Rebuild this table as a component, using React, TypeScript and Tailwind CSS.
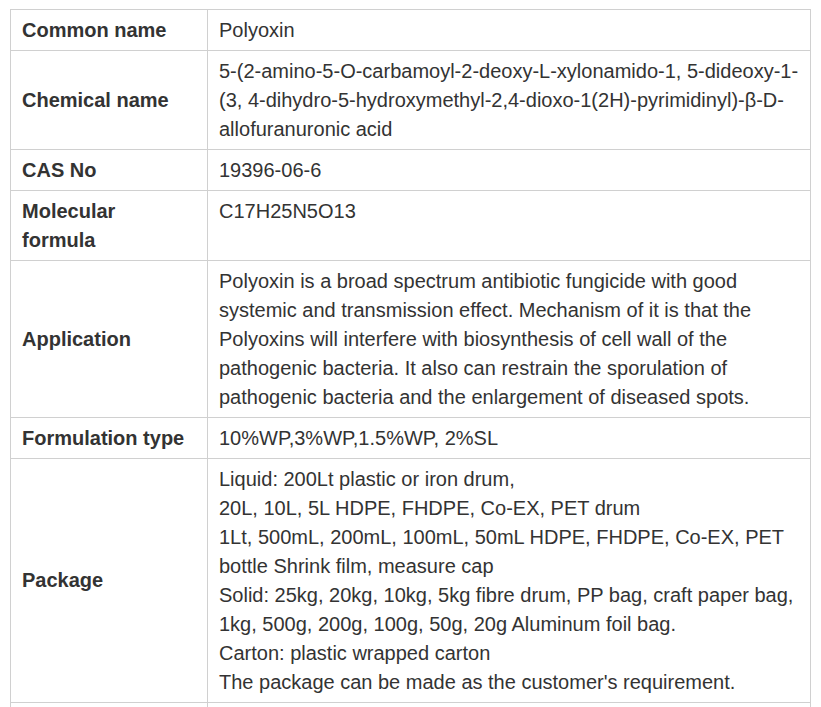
import React from "react";

const rows: { label: React.ReactNode; value: React.ReactNode; top?: boolean }[] = [
  { label: "Common name", value: "Polyoxin" },
  {
    label: "Chemical name",
    value: (
      <>
        5-(2-amino-5-O-carbamoyl-2-deoxy-L-xylonamido-1, 5-dideoxy-1-
        <br />
        (3, 4-dihydro-5-hydroxymethyl-2,4-dioxo-1(2H)-pyrimidinyl)-β-D-
        <br />
        allofuranuronic acid
      </>
    ),
  },
  { label: "CAS No", value: "19396-06-6" },
  {
    label: (
      <>
        Molecular
        <br />
        formula
      </>
    ),
    value: "C17H25N5O13",
    top: true,
  },
  {
    label: "Application",
    value: (
      <>
        Polyoxin is a broad spectrum antibiotic fungicide with good
        <br />
        systemic and transmission effect. Mechanism of it is that the
        <br />
        Polyoxins will interfere with biosynthesis of cell wall of the
        <br />
        pathogenic bacteria. It also can restrain the sporulation of
        <br />
        pathogenic bacteria and the enlargement of diseased spots.
      </>
    ),
  },
  { label: "Formulation type", value: "10%WP,3%WP,1.5%WP, 2%SL" },
  {
    label: "Package",
    value: (
      <>
        Liquid: 200Lt plastic or iron drum,
        <br />
        20L, 10L, 5L HDPE, FHDPE, Co-EX, PET drum
        <br />
        1Lt, 500mL, 200mL, 100mL, 50mL HDPE, FHDPE, Co-EX, PET
        <br />
        bottle Shrink film, measure cap
        <br />
        Solid: 25kg, 20kg, 10kg, 5kg fibre drum, PP bag, craft paper bag,
        <br />
        1kg, 500g, 200g, 100g, 50g, 20g Aluminum foil bag.
        <br />
        Carton: plastic wrapped carton
        <br />
        The package can be made as the customer's requirement.
      </>
    ),
  },
  { label: "\u00a0", value: "\u00a0" },
];

export default function App() {
  return (
    <div
      className="bg-white h-[707px] overflow-hidden pt-[9px] pl-[10px] text-[#333] text-[20px] leading-[29px]"
      style={{ fontFamily: '"Liberation Sans", Arial, sans-serif' }}
    >
      <table className="border-collapse w-[801px] table-fixed">
        <colgroup>
          <col className="w-[197px]" />
          <col />
        </colgroup>
        <tbody>
          {rows.map((r, i) => (
            <tr key={i}>
              <td className="border border-[#d0d0d0] px-[11px] py-[5.5px] font-bold align-middle whitespace-nowrap">
                {r.label}
              </td>
              <td
                className={
                  "border border-[#d0d0d0] px-[11px] py-[5.5px] whitespace-nowrap " +
                  (r.top ? "align-top" : "align-middle")
                }
              >
                {r.value}
              </td>
            </tr>
          ))}
        </tbody>
      </table>
    </div>
  );
}
